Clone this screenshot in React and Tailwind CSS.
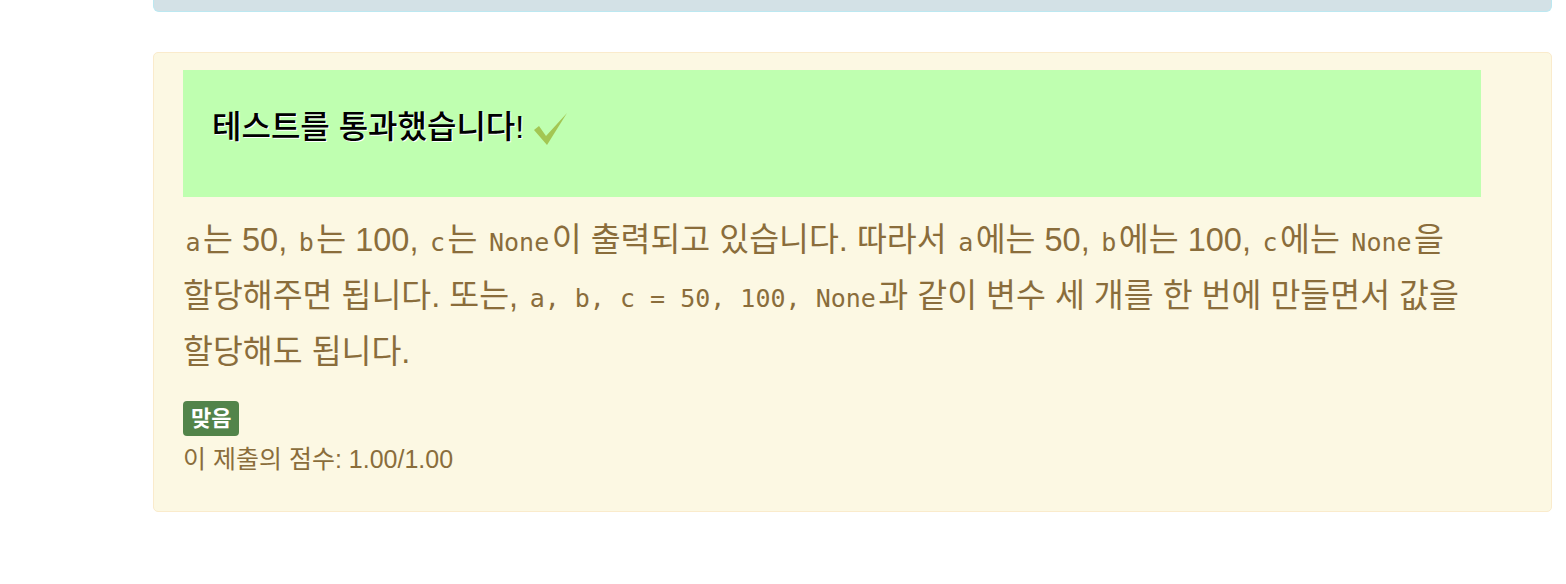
import React from "react";

const ko = { fontFamily: '"Liberation Sans", "Noto Sans CJK KR", "Noto Sans", sans-serif' };
const mono = { fontFamily: '"DejaVu Sans Mono", "Liberation Mono", monospace' };

function C({ children }) {
  return (
    <code className="text-[25px] leading-none px-[2.5px]" style={mono}>
      {children}
    </code>
  );
}

export default function App() {
  return (
    <div className="w-[1566px] h-[584px] bg-white" style={ko}>
      <div className="ml-[153px] w-[1399px]">
        <div className="h-[12px] bg-[#d3e1e6] border-b border-x border-[#bce8f1] rounded-b-[6px]" />
        <div className="mt-[40px] bg-[#fcf8e3] border border-[#faebcc] rounded-[5px] pl-[29px] pr-[70px] pt-[17px] pb-[37px] text-[#8a6d3b]">
          <div className="h-[127px] bg-[#bfffb0] pl-[29px] pt-[35px]">
            <div className="flex items-center text-[32px] leading-[44px] font-medium text-black [text-shadow:1px_1px_0_#ffffff]">
              <span>테스트를 통과했습니다!</span>
              <svg className="ml-[10px] mt-[4px]" width="34" height="34" viewBox="0 0 34 34">
                <path d="M0 18 L5 14 L12 24 L33 1 L13 33 Z" fill="#a3c653" />
              </svg>
            </div>
          </div>
          <p className="mt-[15px] text-[32.5px] leading-[56px] break-keep">
            <C>a</C>는 50, <C>b</C>는 100, <C>c</C>는 <C>None</C>이 출력되고 있습니다. 따라서 <C>a</C>에는 50, <C>b</C>에는 100, <C>c</C>에는 <C>None</C>을 할당해주면 됩니다. 또는, <C>a, b, c = 50, 100, None</C>과 같이 변수 세 개를 한 번에 만들면서 값을 할당해도 됩니다.
          </p>
          <div className="mt-[21px]">
            <span className="inline-block bg-[#52844a] text-white font-bold text-[22px] leading-[35px] h-[35px] px-[8px] rounded-[4px]">
              맞음
            </span>
          </div>
          <div className="text-[25px] leading-[30px] mt-[8px]">이 제출의 점수: 1.00/1.00</div>
        </div>
      </div>
    </div>
  );
}
